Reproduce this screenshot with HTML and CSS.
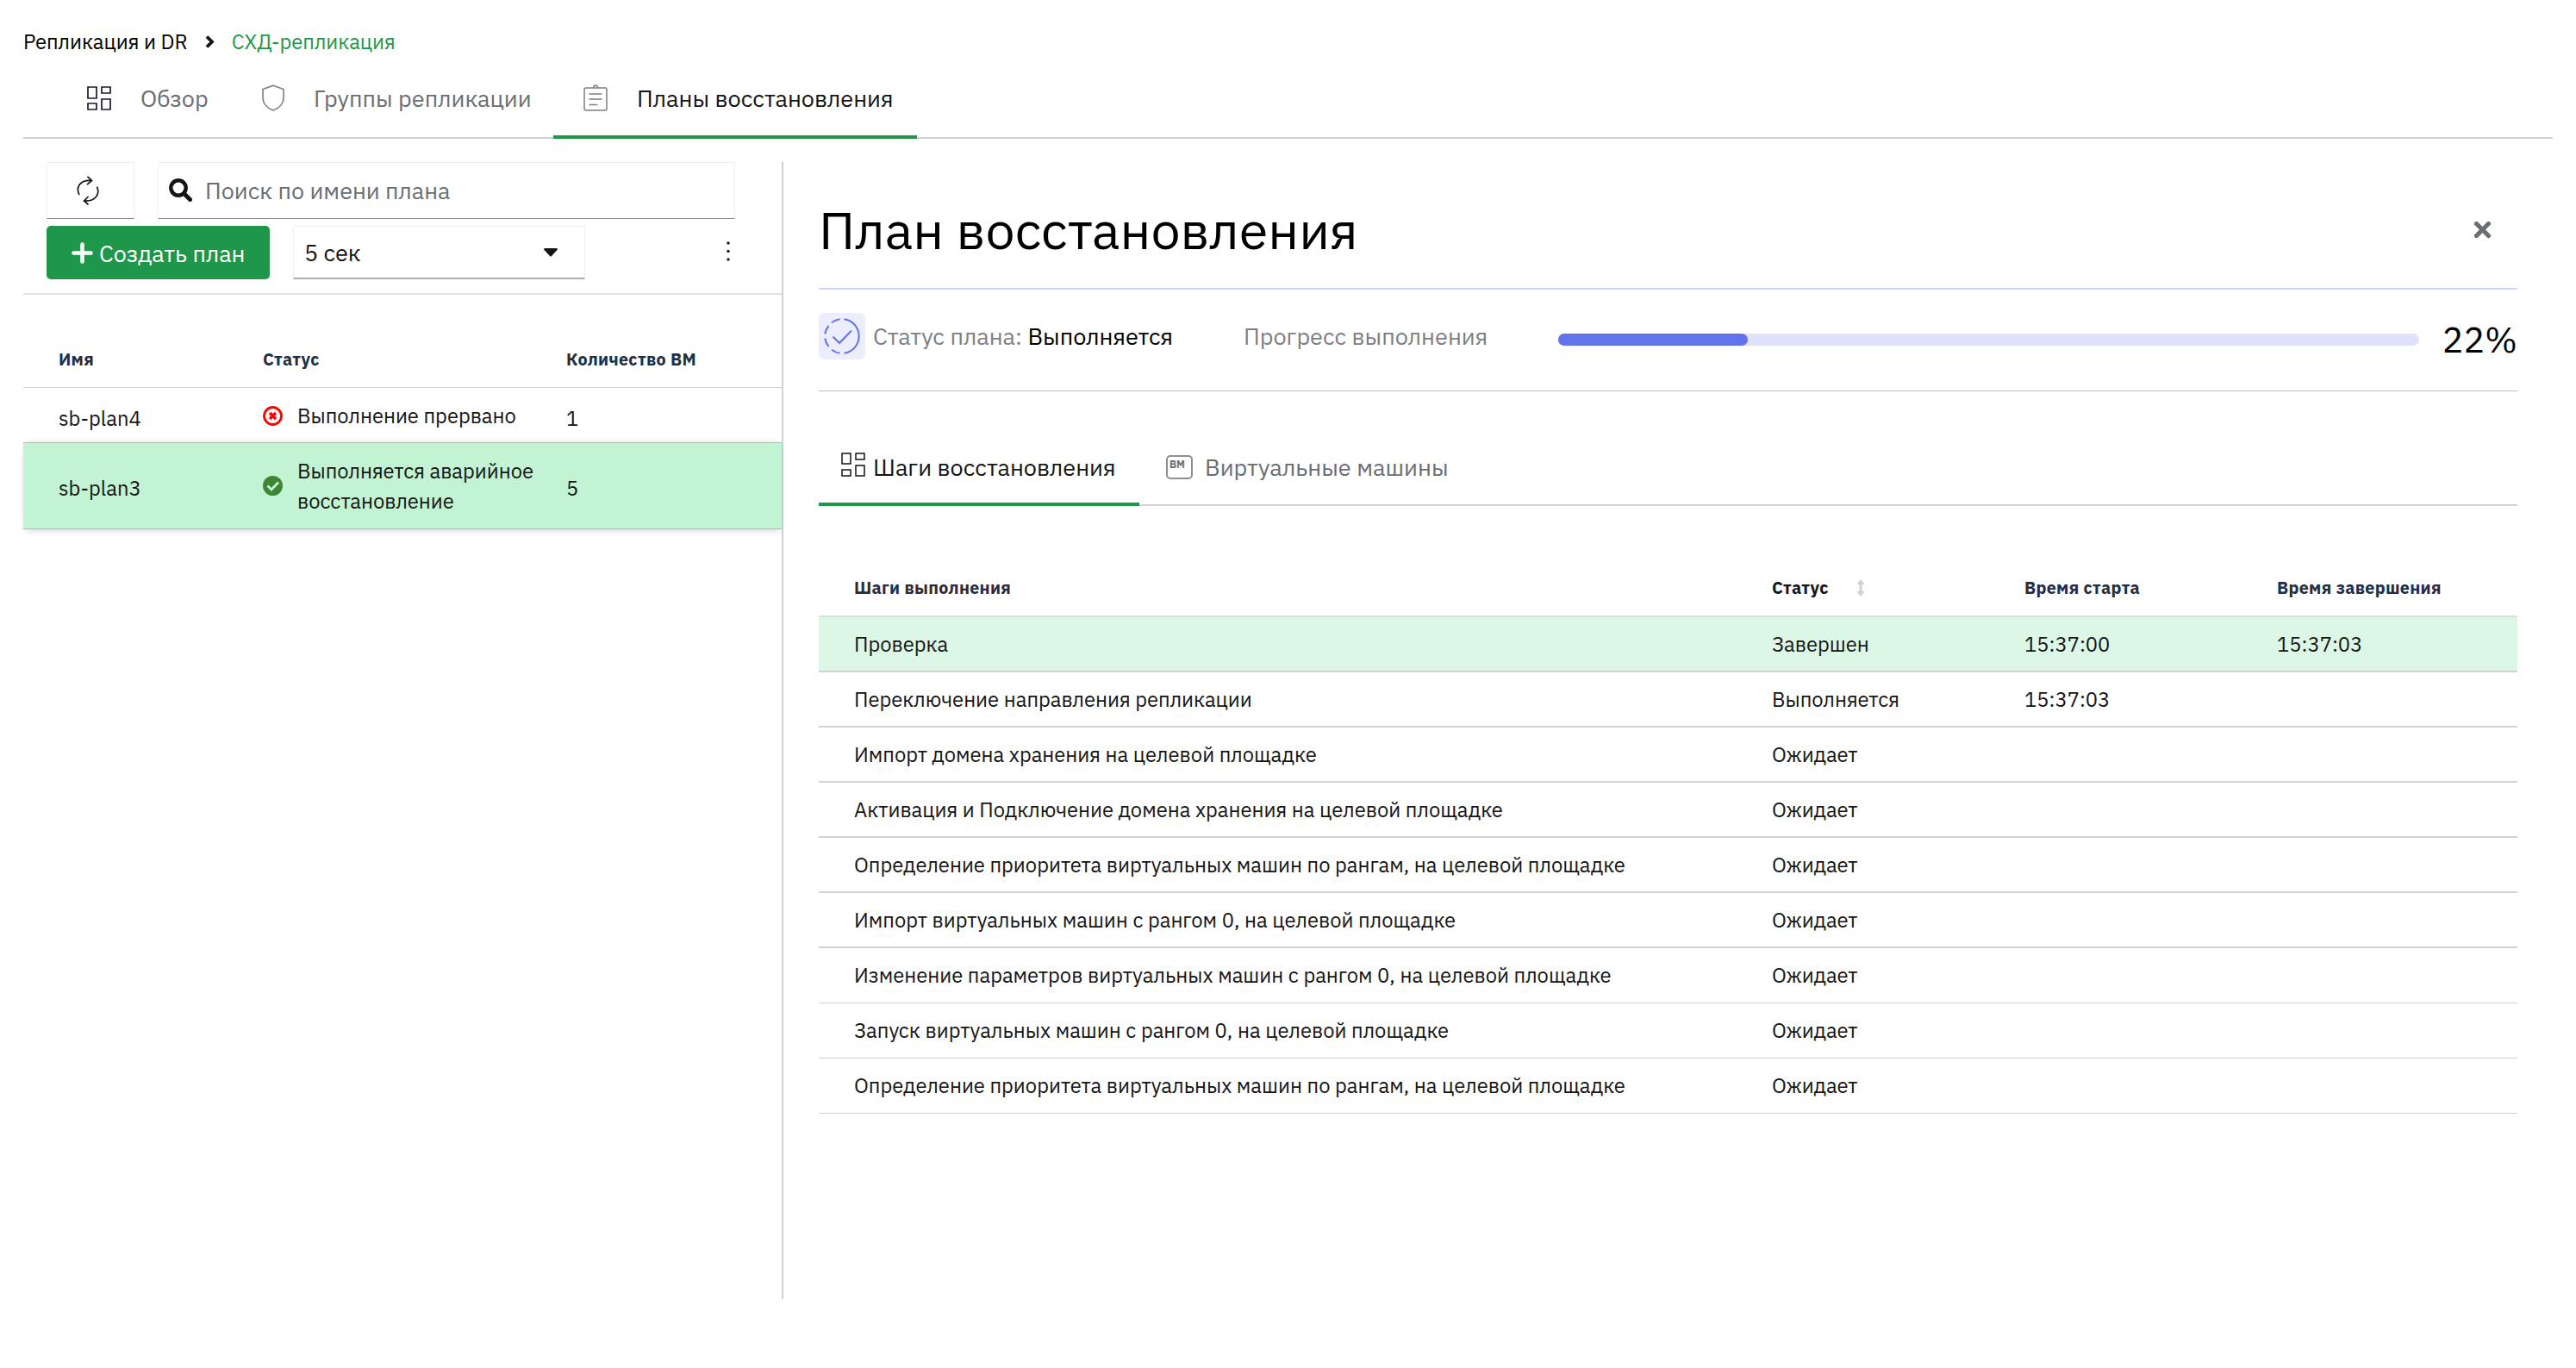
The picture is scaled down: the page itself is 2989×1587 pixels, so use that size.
FILE: index.html
```
<!DOCTYPE html>
<html lang="ru">
<head>
    <meta charset="UTF-8">
    <meta name="viewport" content="width=device-width, initial-scale=1.0">
    <title>План восстановления</title>
    <link rel="stylesheet" href="styles.css">
</head>
<body>
    <nav class="breadcrumb">
        <span>Репликация и DR</span>
        <svg class="chevron" width="11" height="15" viewBox="0 0 11 15"><path d="M2 1.500l6 6-6 6" fill="none" stroke="#151515" stroke-width="3.800"/></svg>
        <a class="current">СХД-репликация</a>
    </nav>

    <div class="tabs">
        <div class="tab tab-overview">
            <svg width="28" height="28" viewBox="0 0 28 28" fill="none" stroke="#1b1b2b" stroke-width="1.700"><path d="M1 1h10v13H1zM17 1h10v7H17zM1 20h10v7H1zM17 15h10v12H17z"/></svg>
            <span>Обзор</span>
        </div>
        <div class="tab tab-groups">
            <svg width="26" height="31" viewBox="0 0 26 31" fill="none" stroke="#7d7f87" stroke-width="1.6"><path d="M13 1.200L25 5.500V15c0 7-5 12.500-12 15C6 27.500 1 22 1 15V5.500z"/></svg>
            <span>Группы репликации</span>
        </div>
        <div class="tab tab-plans active">
            <svg width="28" height="31" viewBox="0 0 28 31" fill="none" stroke="#7d7f87" stroke-width="1.5"><rect x="1" y="4" width="26" height="26" rx="2"/><path d="M11.500 4c0-4 5-4 5 0M6.500 11h15M6.500 17h15M6.500 23.500h10"/></svg>
            <span>Планы восстановления</span>
        </div>
    </div>

    <div class="content">
        <div class="sidebar">
            <div class="toolbar">
                <button class="refresh" type="button">
                    <svg width="26" height="34" viewBox="0 0 26 34" fill="none" stroke="#151515" stroke-width="1.7"><path d="M3 22C-1.500 13 4 4.500 17 5.500M12.500.800l5 4.700-5.500 4.700M23.500 12.500c4 9-2 17.500-15 16.500M13.500 24L8.500 29l5 4.500"/></svg>
                </button>
                <div class="search">
                    <svg width="27" height="27" viewBox="0 0 27 27" fill="none" stroke="#151515"><circle cx="11" cy="11" r="8.700" stroke-width="4.400"/><path d="M17.500 17.500l7 7" stroke-width="5" stroke-linecap="round"/></svg>
                    <span>Поиск по имени плана</span>
                </div>
                <button class="create" type="button">
                    <svg width="25" height="25" viewBox="0 0 25 25" fill="none" stroke="#fff" stroke-width="4.600" stroke-linecap="round"><path d="M12.500 2.500v20M2.500 12.500h20"/></svg>
                    <span>Создать план</span>
                </button>
                <div class="select">
                    <span>5 сек</span>
                    <svg width="16" height="10" viewBox="0 0 16 10"><path d="M1 0h14q1.500.500.500 2L9 9q-1 1-2 0L.500 2Q-.500.500 1 0z" fill="#151515"/></svg>
                </div>
                <svg class="kebab" width="4" height="24" viewBox="0 0 4 24" fill="#151525"><circle cx="2" cy="2" r="1.700"/><circle cx="2" cy="11.500" r="1.700"/><circle cx="2" cy="21" r="1.700"/></svg>
            </div>

            <div class="plans">
                <div class="plan plan-head">
                    <span>Имя</span>
                    <span>Статус</span>
                    <span class="count">Количество ВМ</span>
                </div>
                <div class="plan plan-failed">
                    <span class="name">sb-plan4</span>
                    <div class="state">
                        <svg width="23" height="23" viewBox="0 0 23 23" fill="none" stroke="#ff0000"><circle cx="11.500" cy="11.500" r="10" stroke-width="2.800"/><path d="M8 8l7 7M15 8l-7 7" stroke-width="3.400"/></svg>
                        <span>Выполнение прервано</span>
                    </div>
                    <span>1</span>
                </div>
                <div class="plan plan-active">
                    <span class="name">sb-plan3</span>
                    <div class="state">
                        <svg width="23" height="23" viewBox="0 0 23 23"><circle cx="11.500" cy="11.500" r="11.500" fill="#3e8635"/><path d="M5.500 11.500l4.500 4.500 8-8.500" fill="none" stroke="#c2f4d3" stroke-width="2.800"/></svg>
                        <span>Выполняется аварийное<br>восстановление</span>
                    </div>
                    <span>5</span>
                </div>
            </div>
        </div>

        <div class="details">
            <div class="title">
                <h1>План восстановления</h1>
                <svg width="21" height="21" viewBox="0 0 21 21"><path d="M3.500 3.500l14 14M17.500 3.500l-14 14" stroke="#6a6e73" stroke-width="5.200" stroke-linecap="round"/></svg>
            </div>

            <div class="status">
                <div class="status-icon">
                    <svg width="42" height="42" viewBox="0 0 42 42" fill="none" stroke="#6272ea" stroke-width="2"><path d="M23.500 1.200a20 20 0 0 1 0 39.600"/><path d="M18.500 1.200a20 20 0 0 0-9.500 4M5.500 9a20 20 0 0 0-4.300 9.500M1.200 23.500A20 20 0 0 0 5.500 33M9 36.800a20 20 0 0 0 9.500 4"/><path d="M10.500 21.500l7.500 7.500L32 14.500"/></svg>
                </div>
                <span class="status-label">Статус плана: <b>Выполняется</b></span>
                <span class="progress-label">Прогресс выполнения</span>
                <div class="progress"><div class="progress-bar" style="width: 22%"></div></div>
                <span class="percent">22%</span>
            </div>

            <div class="subtabs">
                <div class="subtab active">
                    <svg width="28" height="28" viewBox="0 0 28 28" fill="none" stroke="#151515" stroke-width="1.500"><path d="M1 1h10v12H1zM17 1h10v7H17zM1 20h10v7H1zM17 15h10v12H17z"/></svg>
                    <span>Шаги восстановления</span>
                </div>
                <div class="subtab vms">
                    <div class="vm-icon">ВМ</div>
                    <span>Виртуальные машины</span>
                </div>
            </div>

            <div class="steps">
                <div class="step step-head"><span>Шаги выполнения</span><span class="sorted">Статус <svg width="10" height="20" viewBox="0 0 10 20"><path d="M5 0l4.700 6H6.500v8h3.200L5 20 .300 14h3.200V6H.300z" fill="#d2d2d2"/></svg></span><span>Время старта</span><span>Время завершения</span></div>
                <div class="step done"><span>Проверка</span><span>Завершен</span><span>15:37:00</span><span>15:37:03</span></div>
                <div class="step"><span>Переключение направления репликации</span><span>Выполняется</span><span>15:37:03</span></div>
                <div class="step"><span>Импорт домена хранения на целевой площадке</span><span>Ожидает</span></div>
                <div class="step"><span>Активация и Подключение домена хранения на целевой площадке</span><span>Ожидает</span></div>
                <div class="step"><span>Определение приоритета виртуальных машин по рангам, на целевой площадке</span><span>Ожидает</span></div>
                <div class="step"><span>Импорт виртуальных машин с рангом 0, на целевой площадке</span><span>Ожидает</span></div>
                <div class="step thin"><span>Изменение параметров виртуальных машин с рангом 0, на целевой площадке</span><span>Ожидает</span></div>
                <div class="step thin"><span>Запуск виртуальных машин с рангом 0, на целевой площадке</span><span>Ожидает</span></div>
                <div class="step thin"><span>Определение приоритета виртуальных машин по рангам, на целевой площадке</span><span>Ожидает</span></div>
            </div>
        </div>
    </div>
</body>
</html>
```
FILE: styles.css
```
* {
    box-sizing: border-box;
}

body {
    margin: 0;
    padding: 31px 27px 0;
    background-color: #fff;
    color: #151515;
    font-family: "IBM Plex Sans", "Noto Sans", sans-serif;
    font-size: 23.75px;
    white-space: nowrap;
}

svg {
    display: block;
    flex-shrink: 0;
}

button {
    font: inherit;
    padding: 0;
}

.breadcrumb {
    display: flex;
    align-items: center;
    height: 35px;
    color: #000;
}

.chevron {
    margin: 0 20px;
}

.current {
    color: #1e974b;
}

.tabs {
    display: flex;
    height: 95px;
    border-bottom: 2px solid #d2d2d2;
    font-size: 27.1px;
    color: #6a6e73;
}

.tab {
    display: flex;
    align-items: center;
    height: 95px;
}

.tab-overview {
    width: 249px;
    padding-left: 74px;
    gap: 34px;
}

.tab-groups {
    width: 366px;
    padding-left: 28px;
    gap: 34px;
}

.tab-plans {
    width: 422px;
    padding-top: 4px;
    padding-left: 35px;
    gap: 34px;
}

.active {
    color: #151515;
    border-bottom: 4px solid #1e974b;
}

.content {
    display: flex;
    margin-top: 27px;
    height: 1319px;
}

.sidebar {
    width: 882px;
    border-right: 2px solid #d2d2d2;
}

.toolbar {
    display: flex;
    flex-wrap: wrap;
    align-content: flex-start;
    height: 154px;
    padding-left: 27px;
    gap: 8px 27px;
    border-bottom: 2px solid #e2e2e2;
    font-size: 27px;
}

.refresh {
    display: flex;
    align-items: center;
    width: 102px;
    height: 66px;
    padding-left: 34px;
    background: none;
    border: 1px solid #f0f0f0;
    border-bottom-color: #8a8d90;
}

.search {
    display: flex;
    align-items: center;
    width: 670px;
    height: 66px;
    padding: 0 0 1px 12px;
    gap: 15px;
    border: 1px solid #f0f0f0;
    border-bottom-color: #8a8d90;
    color: #6a6e73;
}

.create {
    display: flex;
    align-items: center;
    width: 259px;
    height: 62px;
    padding-left: 29px;
    gap: 7px;
    border: none;
    border-radius: 5px;
    background-color: #1e974b;
    color: #fff;
}

.select {
    display: flex;
    align-items: center;
    justify-content: space-between;
    width: 339px;
    height: 62px;
    padding: 0 31px 0 12px;
    border: 1px solid #f0f0f0;
    border-bottom: 2px solid #adaeb0;
}

.kebab {
    margin: 18px 0 0 137px;
}

.plan {
    display: grid;
    grid-template-columns: 237px 352px 1fr;
    align-items: center;
    padding-left: 41px;
}

.plan-head {
    height: 108px;
    padding-top: 41px;
    border-bottom: 1px solid #d2d2d2;
    color: #212e47;
    font-size: 19.7px;
    font-weight: 700;
    letter-spacing: 0.3px;
}

.plan-failed {
    height: 63px;
    padding-top: 7px;
}

.plan-active {
    height: 101px;
    padding-top: 5px;
    background-color: #c2f4d3;
    border-top: 1px solid #b8bbbe;
    border-bottom: 1px solid #b8bbbe;
    box-shadow: 0 4px 8px -3px rgba(3, 3, 3, 0.2), 0 -4px 8px -5px rgba(3, 3, 3, 0.15);
}

.state {
    display: flex;
    align-items: center;
    gap: 17px;
    line-height: 35px;
    margin-top: -5px;
}

.details {
    width: 1971px;
    margin-left: 41px;
}

.title {
    display: flex;
    align-items: center;
    justify-content: space-between;
    height: 148px;
    padding: 10px 30px 0 0;
    border-bottom: 2px solid #cfd4f7;
    color: #000;
}

h1 {
    margin: 0;
    font-size: 61px;
    font-weight: 400;
}

.status {
    display: flex;
    align-items: center;
    height: 118px;
    padding-bottom: 10px;
    border-bottom: 1px solid #b2b9ee;
    color: #7d7f83;
    font-size: 27.1px;
}

.status-icon {
    display: flex;
    align-items: center;
    justify-content: center;
    width: 54px;
    height: 54px;
    border-radius: 6px;
    background-color: #eceefd;
}

.status-label {
    width: 439px;
    padding-left: 9px;
}

.status-label b {
    color: #000;
    font-weight: 400;
}

.progress-label {
    width: 365px;
}

.progress {
    width: 999px;
    height: 14px;
    margin-top: 8px;
    border-radius: 7px;
    background-color: #dfe2fb;
}

.progress-bar {
    height: 14px;
    border-radius: 7px;
    background-color: #6272ea;
}

.percent {
    margin-left: 27px;
    padding-top: 7px;
    color: #000;
    font-size: 41px;
}

.subtabs {
    display: flex;
    height: 133px;
    padding-top: 45px;
    border-bottom: 2px solid #d2d2d2;
    color: #6a6e73;
    font-size: 27.1px;
}

.subtab {
    display: flex;
    align-items: center;
    height: 88px;
    gap: 9px;
}

.subtab.active {
    width: 372px;
    padding-top: 1px;
    padding-left: 26px;
}

.subtab.active svg {
    margin-bottom: 5px;
}

.subtab.vms {
    padding-left: 31px;
    padding-bottom: 3px;
    gap: 14px;
}

.vm-icon {
    width: 31px;
    height: 28px;
    padding: 3px 0 0 2px;
    border: 2px solid #8d8f94;
    border-radius: 5px;
    font-size: 12px;
    font-weight: 700;
    line-height: 11px;
}

.step {
    display: grid;
    grid-template-columns: 1065px 293px 293px 1fr;
    align-items: center;
    height: 64px;
    padding-left: 41px;
    border-bottom: 2px solid #d2d2d2;
}

.step.thin {
    padding-bottom: 1px;
    border-bottom-width: 1px;
}

.step-head {
    height: 129px;
    padding-top: 62px;
    border-bottom-color: #dddddd;
    color: #212e47;
    font-size: 19.7px;
    font-weight: 700;
    letter-spacing: 0.3px;
}

.sorted {
    display: flex;
    align-items: center;
    gap: 32px;
    color: #151515;
}

.done {
    background-color: #dcf7e6;
}
```
